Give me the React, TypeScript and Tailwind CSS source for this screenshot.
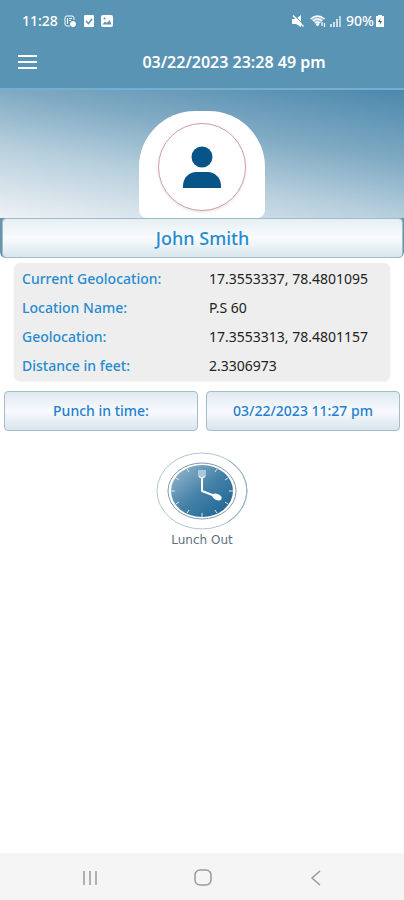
import React from "react";

type Detail = { label: string; value: string };

const details: Detail[] = [
    { label: "Current Geolocation:", value: "17.3553337, 78.4801095" },
    { label: "Location Name:", value: "P.S 60" },
    { label: "Geolocation:", value: "17.3553313, 78.4801157" },
    { label: "Distance in feet:", value: "2.3306973" },
];

const StatusBar: React.FC = () => (
    <div className="flex h-[42px] items-center justify-between pr-5 pl-[22px] text-sm font-medium">
        <div className="flex items-center gap-1.5">
            <span>11:28</span>
            <svg className="h-3 w-3" viewBox="0 0 12 12" fill="none" stroke="currentColor">
                <path d="M6 11H3Q1 11 1 9V3Q1 1 3 1H8Q10 1 10 3V5M3.5 3V9M5 3.5H8M5 5.5H7" />
                <circle cx="9" cy="9" r="2.5" fill="currentColor" />
            </svg>
            <svg className="ml-px h-3 w-3" viewBox="0 0 12 12">
                <rect x="1" width="10" height="12" rx="1" fill="white" />
                <path d="M3 6L5.5 8.5L9 4" fill="none" stroke="#5a94b4" strokeWidth="1.5" />
            </svg>
            <svg className="h-3 w-3" viewBox="0 0 12 12">
                <rect width="12" height="12" rx="2" fill="white" />
                <path d="M1.5 9.5L4 6.5L6 8L8.5 5L10.5 9.5Z" fill="#5a94b4" />
                <circle cx="3.5" cy="3.5" r="1" fill="#5a94b4" />
            </svg>
        </div>
        <div className="flex items-center gap-1">
            <svg className="h-3 w-3" viewBox="0 0 12 12" fill="white">
                <path d="M0 4H4L9 0V12L4 9H0Z" />
                <path d="M2 0L12 10" stroke="#5a94b4" strokeWidth="1" />
                <path d="M1 0.5L11.5 11.5" stroke="white" strokeWidth="1.5" />
            </svg>
            <svg className="ml-0.5 h-3 w-4" viewBox="0 0 16 12" fill="none" stroke="white">
                <path d="M1 4Q7.5 -1 14 4L7.5 11Z" fill="white" fillOpacity="0.4" stroke="none" />
                <path d="M0.5 4Q7.5 -2 14.5 4M3 6Q7.5 2 12 6M5 8Q7.5 6 10 8" strokeWidth="1.5" />
                <path d="M6 9H9L7.5 11Z" fill="white" />
                <path d="M12 7V11M14.5 8V12" strokeWidth="1.2" />
            </svg>
            <svg className="h-3 w-3" viewBox="0 0 12 12" fill="white">
                <path d="M0 9H2V12H0ZM3 7H5V12H3ZM6 4H8V12H6Z" opacity="0.7" />
                <path d="M9 1H11V12H9Z" opacity="0.6" />
            </svg>
            <div className="flex items-center gap-0.5">
                <span>90%</span>
                <svg className="h-3 w-2" viewBox="0 0 8 12">
                    <path d="M2 0H6V1H8V12H0V1H2Z" fill="white" />
                    <path d="M4.5 3L2 7H4L3.5 10L6 6H4Z" fill="#315a70" />
                </svg>
            </div>
        </div>
    </div>
);

const LunchClock: React.FC = () => (
    <svg className="h-[78px] w-[92px]" viewBox="0 0 92 78" fill="none">
        <defs>
            <linearGradient id="face" x1="0" y1="0" x2="1" y2="1">
                <stop offset="0" stopColor="#9dbdd1" />
                <stop offset="0.5" stopColor="#4581a8" />
                <stop offset="1" stopColor="#17618f" />
            </linearGradient>
        </defs>
        <ellipse cx="46" cy="39" rx="45" ry="38" fill="white" stroke="#b3c4d0" />
        <path d="M72 8Q91 20 91 39Q90 58 72 70" stroke="#8eb0c5" />
        <ellipse cx="46" cy="39" rx="34" ry="28" fill="white" stroke="#8298ad" />
        <ellipse cx="46" cy="39" rx="31" ry="26" fill="url(#face)" />
        <g stroke="#d8e9f2" strokeWidth="1">
            <path d="M46 61V65M15 39H19M73 39H77" />
            <path d="M31 17L33 20M61 17L59 20M31 61L33 58M61 61L59 58" />
            <path d="M20 26L23 28M72 26L69 28M20 52L23 50M72 52L69 50" />
        </g>
        <path d="M46 25V39L59 44" stroke="white" strokeWidth="2" strokeLinejoin="round" />
        <path d="M43 18V23Q43 26 46 26Q49 26 49 23V18M45 18V25M47 18V25" stroke="#dcebf3" strokeWidth="1.2" />
        <ellipse cx="61" cy="45" rx="5" ry="3" transform="rotate(25 61 45)" fill="white" />
    </svg>
);

const App: React.FC = () => {
    return (
        <div className="flex min-h-screen flex-col bg-white font-['Noto_Sans',sans-serif]">
            <header className="border-b-2 border-[#76aed2] bg-[#5a94b4] text-white">
                <StatusBar />
                <div className="flex h-[46px] items-center pb-1.5">
                    <div className="w-16 pl-[18px]">
                        <button type="button" aria-label="Menu" className="flex w-[19px] flex-col gap-1">
                            <span className="h-0.5 w-full bg-white"></span>
                            <span className="h-0.5 w-full bg-white"></span>
                            <span className="h-0.5 w-full bg-white"></span>
                        </button>
                    </div>
                    <h1 className="flex-1 text-center text-base font-semibold">03/22/2023 23:28 49 pm</h1>
                </div>
            </header>

            <main className="flex-1">
                <div className="flex h-32 items-end justify-center bg-linear-[190deg,#4a88ad_0%,#80aac3_36%,#b7cfdd_64%,#eef2f5_100%]">
                    <div className="flex h-[107px] w-[126px] justify-center rounded-t-[56px] rounded-b-lg bg-white pt-3">
                        <div className="flex size-[88px] items-center justify-center rounded-full border border-[#d29ba5] shadow-sm">
                            <svg className="h-[42px] w-[38px]" viewBox="0 0 38 42" fill="#075488">
                                <circle cx="19" cy="11" r="10.5" />
                                <path d="M0 42V40C0 31 7 26 13 26H25C31 26 38 31 38 40V42Z" />
                            </svg>
                        </div>
                    </div>
                </div>

                <div className="rounded-b-md bg-[#6b94aa]">
                    <h2 className="mr-px ml-0.5 flex h-10 items-center justify-center rounded-sm border border-[#9dbccc] bg-linear-to-b from-[#e6eff4] via-[#f9fbfd] to-[#d8e6ed] text-lg font-medium text-[#278bd1]">
                        John Smith
                    </h2>
                </div>

                <dl className="mx-3.5 mt-[5px] rounded-md bg-[#eeeeee] px-2 py-px text-sm shadow-xs">
                    {details.map((item) => (
                        <div key={item.label} className="grid h-[29px] grid-cols-[187px_1fr] items-center">
                            <dt className="font-medium text-[#278bd1]">{item.label}</dt>
                            <dd className="whitespace-nowrap text-[#222222]">{item.value}</dd>
                        </div>
                    ))}
                </dl>

                <div className="mt-2.5 grid grid-cols-2 gap-2 px-1 text-sm font-medium text-[#247fd0]">
                    <button type="button" className="h-10 rounded-sm border border-[#a5bdca] bg-linear-to-b from-[#dfe9f0] via-[#f8fafe] to-[#d8e5ec]">
                        Punch in time:
                    </button>
                    <button type="button" className="h-10 rounded-sm border border-[#a5bdca] bg-linear-to-b from-[#dfe9f0] via-[#f8fafe] to-[#d8e5ec]">
                        03/22/2023 11:27 pm
                    </button>
                </div>

                <button type="button" className="mx-auto mt-[21px] flex flex-col items-center">
                    <LunchClock />
                    <span className="mt-0.5 font-['DejaVu_Sans',sans-serif] text-xs text-[#5d7182]">Lunch Out</span>
                </button>
            </main>

            <nav className="flex h-[47px] items-center justify-between bg-[#f5f5f5] pr-[78px] pl-20 text-[#999999]">
                <button type="button" aria-label="Recent apps">
                    <svg className="size-5" viewBox="0 0 20 20" stroke="currentColor" strokeWidth="1.5">
                        <path d="M4 4V18M10 4V18M16 4V18" />
                    </svg>
                </button>
                <button type="button" aria-label="Home">
                    <svg className="size-5" viewBox="0 0 20 20" fill="none" stroke="currentColor" strokeWidth="1.5">
                        <rect x="2" y="3" width="16" height="15" rx="5" />
                    </svg>
                </button>
                <button type="button" aria-label="Back">
                    <svg className="size-5" viewBox="0 0 20 20" fill="none" stroke="currentColor" strokeWidth="1.5">
                        <path d="M14 4L6 11L14 18" />
                    </svg>
                </button>
            </nav>
        </div>
    );
};

export default App;
